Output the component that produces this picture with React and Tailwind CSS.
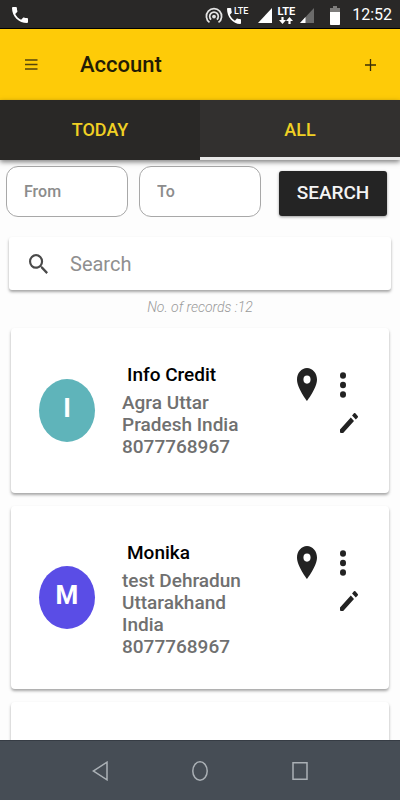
import React, { useState } from "react";

const records = [
  {
    id: 1,
    name: "Info Credit",
    address: "Agra Uttar Pradesh India",
    phone: "8077768967",
    color: "bg-[#5fb4ba]",
  },
  {
    id: 2,
    name: "Monika",
    address: "test Dehradun Uttarakhand India",
    phone: "8077768967",
    color: "bg-[#5a4de6]",
  },
];

function StatusBar() {
  return (
    <div className="flex h-[29px] shrink-0 items-center border-b border-black bg-[#292827] pl-3 pr-2 pt-[2px] text-white">
      <svg className="h-4 w-4" viewBox="3 3 18 18" preserveAspectRatio="none" fill="currentColor">
        <path d="M6.62 10.79c1.44 2.83 3.76 5.14 6.59 6.59l2.2-2.2c.27-.27.67-.36 1.02-.24 1.12.37 2.33.57 3.57.57.55 0 1 .45 1 1V20c0 .55-.45 1-1 1-9.39 0-17-7.61-17-17 0-.55.45-1 1-1h3.5c.55 0 1 .45 1 1 0 1.25.2 2.45.57 3.57.11.35.03.74-.25 1.02l-2.2 2.2z" />
      </svg>

      <div className="ml-auto flex items-center">
        {/* hotspot */}
        <svg className="h-[17px] w-[18px]" viewBox="0 0 18 17" fill="none" stroke="#e4e4e4" strokeWidth="1.7">
          <path d="M4.5 15.4A7.6 7.6 0 1 1 13.5 15.4" />
          <path d="M6.1 12.6A4.3 4.3 0 1 1 11.9 12.6" />
          <circle cx="9" cy="9.6" r="1.9" fill="#e4e4e4" stroke="none" />
        </svg>

        {/* volte call */}
        <div className="ml-1 flex items-start">
          <svg className="-mr-[7px] h-[17px] w-[14px]" viewBox="3 2 18 19" preserveAspectRatio="none" fill="currentColor">
            <path d="M6.62 10.79c1.44 2.83 3.76 5.14 6.59 6.59l2.2-2.2c.27-.27.67-.36 1.02-.24 1.12.37 2.33.57 3.57.57.55 0 1 .45 1 1V20c0 .55-.45 1-1 1-9.39 0-17-7.61-17-17 0-.55.45-1 1-1h3.5c.55 0 1 .45 1 1 0 1.25.2 2.45.57 3.57.11.35.03.74-.25 1.02l-2.2 2.2z" />
          </svg>
          <span className="text-[9px] font-medium leading-[8px]">LTE</span>
        </div>

        <svg className="ml-[10px] h-[15px] w-[14px]" viewBox="0 0 14 15" fill="currentColor">
          <path d="M14 0V15H0z" />
        </svg>

        <div className="ml-[5px] flex flex-col items-center">
          <span className="text-[11px] font-bold leading-[10px]">LTE</span>
          <svg className="h-[7px] w-[14px]" viewBox="0 0 14 7" fill="currentColor">
            <path d="M2.4 0h2.2v3H7L3.5 7 0 3h2.4z" />
            <path d="M9.4 7h2.2V4H14L10.5 0 7 4h2.4z" />
          </svg>
        </div>

        <svg className="ml-[5px] h-[15px] w-[14px]" viewBox="0 0 14 15">
          <path d="M14 0V15H0z" fill="#6b6b6a" />
          <path d="M5.5 9.1V15H0z" fill="#fff" />
        </svg>

        <svg className="ml-4 h-[19px] w-[10px]" viewBox="0 0 10 19">
          <path d="M3 0h4v2h3v5H0V2h3z" fill="#7d7c7b" />
          <path d="M0 6h10v12.2a.8.8 0 0 1-.8.8H.8a.8.8 0 0 1-.8-.8z" fill="#fff" />
        </svg>

        <span className="ml-3 text-base leading-5">12:52</span>
      </div>
    </div>
  );
}

function Header() {
  return (
    <header className="flex h-[71px] shrink-0 items-center bg-[#fecb08] px-6 text-[#231c05]">
      <button aria-label="Menu">
        <svg className="h-[13px] w-[14px]" viewBox="0 0 14 13" stroke="#55450c" strokeWidth="1.4">
          <path d="M1 2h12.5M1 6.5h12.5M1 11h12.5" />
        </svg>
      </button>
      <h1 className="ml-[42px] text-[22px] font-medium leading-7">Account</h1>
      <button aria-label="Add" className="ml-auto">
        <svg className="h-3 w-[11px]" viewBox="0 0 11 12" stroke="#3a2f08" strokeWidth="1.3">
          <path d="M5.5 0v12M0 6h11" />
        </svg>
      </button>
    </header>
  );
}

function RecordCard({ record }) {
  return (
    <li className="flex min-h-[165px] items-start rounded bg-white pl-7 pr-[31px] shadow-[0_2px_3px_rgba(0,0,0,0.35)]">
      <div
        className={`flex h-[63px] w-14 shrink-0 items-center justify-center self-center rounded-[50%] pb-[6px] text-[26px] font-bold leading-8 text-white ${record.color}`}
      >
        {record.name.charAt(0)}
      </div>

      <div className="ml-[27px] flex-1 pb-[31px] pt-9">
        <h2 className="pl-[5px] text-[19px] font-medium leading-[22px] text-black">{record.name}</h2>
        <p className="mt-[6px] text-[19px] font-medium leading-[22px] text-[#707070]">
          {record.address}
          <br />
          {record.phone}
        </p>
      </div>

      <div className="ml-10 flex shrink-0 items-start gap-[23px] pt-10 text-[#222]">
        <button aria-label="Location">
          <svg className="h-[33px] w-5" viewBox="5 2 14 20" preserveAspectRatio="none" fill="currentColor">
            <path d="M12 2C8.13 2 5 5.13 5 9c0 5.25 7 13 7 13s7-7.75 7-13c0-3.87-3.13-7-7-7zm0 9.5a2.5 2.5 0 0 1 0-5 2.5 2.5 0 0 1 0 5z" />
          </svg>
        </button>
        <div className="flex flex-col items-start gap-[15px] pt-1">
          <button aria-label="More">
            <svg className="h-[26px] w-[6px]" viewBox="0 0 6 26" fill="currentColor">
              <ellipse cx="3" cy="3.5" rx="3" ry="3.3" />
              <ellipse cx="3" cy="13" rx="3" ry="3.3" />
              <ellipse cx="3" cy="22.5" rx="3" ry="3.3" />
            </svg>
          </button>
          <button aria-label="Edit">
            <svg className="h-5 w-[18px]" viewBox="3 3 18 18" preserveAspectRatio="none" fill="currentColor">
              <path d="M3 17.8V20a1 1 0 0 0 1 1h2.2L17 10.2 13.8 7 3 17.8zM20.71 7.04a1 1 0 0 0 0-1.41l-2.34-2.34a1 1 0 0 0-1.41 0l-1.9 1.9 3.75 3.75 1.9-1.9z" />
            </svg>
          </button>
        </div>
      </div>
    </li>
  );
}

function NavBar() {
  return (
    <nav className="flex h-[60px] shrink-0 items-center justify-center gap-[84px] border-t border-[#363c44] bg-[#464d55]">
      <button aria-label="Back">
        <svg className="h-5 w-4" viewBox="0 0 16 20" fill="none" stroke="#aab0b5" strokeWidth="1.5">
          <path d="M15 1.2V18.8L1.2 10z" />
        </svg>
      </button>
      <button aria-label="Home">
        <svg className="h-5 w-4" viewBox="0 0 16 20" fill="none" stroke="#aab0b5" strokeWidth="1.5">
          <ellipse cx="8" cy="10" rx="7.2" ry="9.2" />
        </svg>
      </button>
      <button aria-label="Recent apps">
        <svg className="h-5 w-4" viewBox="0 0 16 20" fill="none" stroke="#aab0b5" strokeWidth="1.5">
          <path d="M1 1.8h14v16.4H1z" />
        </svg>
      </button>
    </nav>
  );
}

function App() {
  const [tab, setTab] = useState("all");
  const [from, setFrom] = useState("");
  const [to, setTo] = useState("");
  const [search, setSearch] = useState("");

  const list = records.filter((r) =>
    r.name.toLowerCase().includes(search.toLowerCase())
  );

  return (
    <div className="flex h-screen flex-col bg-[#fdfdfd] font-[Roboto,sans-serif]">
      <StatusBar />
      <Header />

      {/* TABS */}
      <div className="z-10 flex h-[60px] shrink-0 bg-[#292826] text-lg font-medium text-[#f0d024] shadow-[0_2px_5px_rgba(0,0,0,0.5)]">
        <button
          onClick={() => setTab("today")}
          className={`flex-1 border-b-3 pt-[2px] ${tab === "today" ? "border-[#e8e8e8] bg-[#32302f]" : "border-transparent"}`}
        >
          TODAY
        </button>
        <button
          onClick={() => setTab("all")}
          className={`flex-1 border-b-3 pt-[2px] ${tab === "all" ? "border-[#e8e8e8] bg-[#32302f]" : "border-transparent"}`}
        >
          ALL
        </button>
      </div>

      <main className="flex min-h-0 flex-1 flex-col overflow-hidden">
        {/* DATE FILTER */}
        <form
          onSubmit={(e) => e.preventDefault()}
          className="flex shrink-0 items-center pl-[6px] pr-[13px] pt-[6px]"
        >
          <input
            aria-label="From"
            placeholder="From"
            value={from}
            onChange={(e) => setFrom(e.target.value)}
            className="h-[51px] min-w-0 flex-1 rounded-xl border border-[#a8a8a8] bg-white px-[17px] font-medium text-[#444] outline-none placeholder:text-[#8c8c8c]"
          />
          <input
            aria-label="To"
            placeholder="To"
            value={to}
            onChange={(e) => setTo(e.target.value)}
            className="ml-[11px] h-[51px] min-w-0 flex-1 rounded-xl border border-[#a8a8a8] bg-white px-[17px] font-medium text-[#444] outline-none placeholder:text-[#8c8c8c]"
          />
          <button
            type="submit"
            className="ml-[18px] mt-1 h-[45px] w-[108px] rounded-[3px] bg-[#242424] text-[19px] font-medium text-[#f4f4f4] shadow-[0_1px_3px_rgba(0,0,0,0.4)]"
          >
            SEARCH
          </button>
        </form>

        {/* SEARCH BOX */}
        <label className="mx-[9px] mt-5 flex h-[53px] shrink-0 items-center rounded-[3px] bg-white pl-5 shadow-[0_2px_3px_rgba(0,0,0,0.35)]">
          <svg className="h-5 w-[19px] shrink-0" viewBox="3 3 17.5 17.5" preserveAspectRatio="none" fill="#4a4a4a">
            <path d="M15.5 14h-.79l-.28-.27A6.471 6.471 0 0 0 16 9.5 6.5 6.5 0 1 0 9.5 16c1.61 0 3.09-.59 4.23-1.57l.27.28v.79l5 4.99L20.49 19l-4.99-5zm-6 0C7.01 14 5 11.99 5 9.5S7.01 5 9.5 5 14 7.01 14 9.5 11.99 14 9.5 14z" />
          </svg>
          <input
            aria-label="Search"
            placeholder="Search"
            value={search}
            onChange={(e) => setSearch(e.target.value)}
            className="ml-[22px] min-w-0 flex-1 bg-transparent text-xl leading-7 text-[#444] outline-none placeholder:text-[#8f8f8f]"
          />
        </label>

        <p className="mt-[9px] shrink-0 text-center text-sm font-light italic leading-4 text-[#9a9a9a]">
          No. of records :12
        </p>

        {/* RECORDS */}
        <ul className="mx-[11px] mt-[13px] flex flex-col gap-[13px]">
          {list.map((record) => (
            <RecordCard key={record.id} record={record} />
          ))}
          <li className="min-h-[165px] rounded bg-white shadow-[0_2px_3px_rgba(0,0,0,0.35)]" />
        </ul>
      </main>

      <NavBar />
    </div>
  );
}

export default App;
